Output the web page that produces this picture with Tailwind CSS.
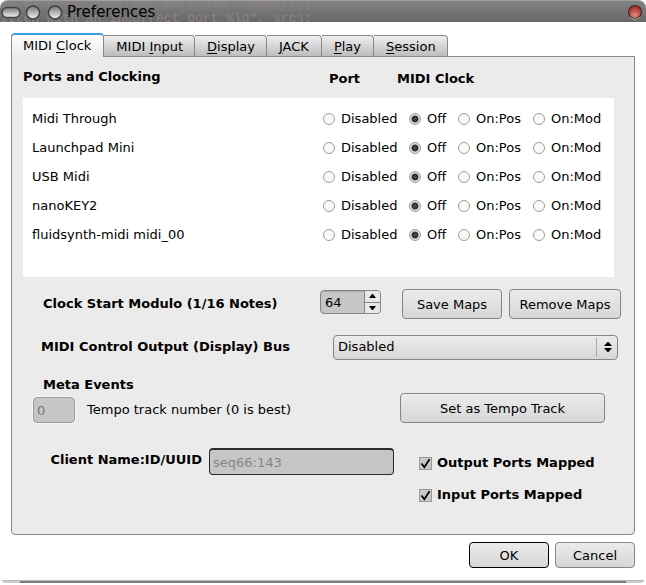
<!DOCTYPE html>
<html lang="en">
<head>
<meta charset="utf-8">
<meta name="viewport" content="width=device-width, initial-scale=1">
<title>Preferences</title>
<script src="https://cdn.jsdelivr.net/npm/@tailwindcss/browser@4"></script>
</head>
<body class="min-h-screen bg-white font-['DejaVu_Sans',sans-serif] text-[13px] leading-4 text-black">
<div class="flex min-h-screen flex-col pb-[2px]">

  <header class="relative flex h-[22px] items-center overflow-hidden rounded-t-lg border-t border-[#a0a0a0] bg-linear-to-b from-[#838383] via-[#757575] to-[#686868]">
    <div aria-hidden="true" class="absolute top-[-5px] left-0 font-['Liberation_Mono',monospace] text-[13px] leading-[15px] whitespace-pre text-[#8d8480]"><div>ed with an incorrect port %ld", myport);</div><div>itten with an incorrect port %ld", src);</div></div>
    <button type="button" aria-label="Menu" class="relative flex pl-px"><svg width="21" height="18" viewBox="0 0 21 18"><defs><linearGradient id="g" x1="0" y1="0" x2="0" y2="1"><stop offset="0" stop-color="#777"/><stop offset="1" stop-color="#f4f4f4"/></linearGradient></defs><rect x="1" y="4.5" width="18" height="10" rx="5" fill="url(#g)" stroke="#444" stroke-width="1.5"/></svg></button>
    <div class="relative flex gap-1 pl-[3px]">
      <button type="button" aria-label="Minimize" class="flex"><svg width="18" height="18" viewBox="0 0 18 18"><circle cx="8" cy="9.5" r="6.5" fill="url(#g)" stroke="#444" stroke-width="1.5"/></svg></button>
      <button type="button" aria-label="Maximize" class="flex"><svg width="18" height="18" viewBox="0 0 18 18"><circle cx="8" cy="9.5" r="6.5" fill="url(#g)" stroke="#444" stroke-width="1.5"/></svg></button>
    </div>
    <h1 class="relative flex-1 pl-[2px] text-[15px] leading-5">Preferences</h1>
    <button type="button" aria-label="Close" class="relative mr-[3px] flex"><svg width="16" height="16" viewBox="0 0 16 16"><defs><radialGradient id="r" cx=".5" cy=".75" r=".65"><stop offset="0" stop-color="#e08a84"/><stop offset="1" stop-color="#a52a2a"/></radialGradient></defs><circle cx="8" cy="8" r="6.5" fill="url(#r)" stroke="#3a2a2a" stroke-width="1.2"/><path d="M3 13.2A7.2 7.2 0 0 0 13 13.2" fill="none" stroke="#b5b5b5" stroke-width=".8"/></svg></button>
  </header>

  <main class="flex flex-1 flex-col px-[11px] pt-[11px]">
    <div role="tablist" class="relative z-10 -mb-px flex items-end">
      <button role="tab" aria-selected="true" type="button" class="h-6 rounded-t border-x border-t-2 border-x-[#888] border-t-[#3a9fe6] bg-linear-to-b from-white to-[#ebebeb] pr-3 pl-[11px]">MIDI <u class="underline-offset-2">C</u>lock</button>
      <button role="tab" type="button" class="h-[22px] rounded-tr border-y border-r border-[#888] bg-linear-to-b from-[#efefef] to-[#bdbdbd] pt-px pr-[11px] pl-3">MIDI <u class="underline-offset-2">I</u>nput</button>
      <button role="tab" type="button" class="h-[22px] rounded-tr border-y border-r border-[#888] bg-linear-to-b from-[#efefef] to-[#bdbdbd] pt-px pr-[11px] pl-3"><u class="underline-offset-2">D</u>isplay</button>
      <button role="tab" type="button" class="h-[22px] rounded-tr border-y border-r border-[#888] bg-linear-to-b from-[#efefef] to-[#bdbdbd] px-3 pt-px"><u class="underline-offset-2">J</u>ACK</button>
      <button role="tab" type="button" class="h-[22px] rounded-tr border-y border-r border-[#888] bg-linear-to-b from-[#efefef] to-[#bdbdbd] px-3 pt-px"><u class="underline-offset-2">P</u>lay</button>
      <button role="tab" type="button" class="h-[22px] rounded-tr border-y border-r border-[#888] bg-linear-to-b from-[#efefef] to-[#bdbdbd] pt-px pr-[11px] pl-3"><u class="underline-offset-2">S</u>ession</button>
    </div>

    <section role="tabpanel" class="flex-1 rounded-b border border-[#888] bg-[#ebebeb] pr-[13px] pl-[11px]">
      <div class="flex h-[41px] items-center pb-[2px] font-bold">
        <h2 class="flex-1">Ports and Clocking</h2>
        <h3 class="mt-1 w-[68px]">Port</h3>
        <h3 class="mt-1 w-56">MIDI Clock</h3>
      </div>

      <div id="ports" class="mr-[7px] flex h-[179px] flex-col bg-white pt-[6px] pl-[9px]"></div>

      <div class="flex h-[54px] items-center pl-5">
        <label for="modulo" class="flex-1 font-bold">Clock Start Modulo (1/16 Notes)</label>
        <div class="mr-[21px] mb-1 flex h-6 w-[61px] overflow-hidden rounded border border-[#858585] bg-[#c6c6c6]">
          <input id="modulo" type="number" value="64" class="w-0 flex-1 appearance-none border-t border-[#aaa] pl-1 [-moz-appearance:textfield] [&::-webkit-inner-spin-button]:appearance-none">
          <div class="flex w-[16px] flex-col border-l border-[#858585] bg-[#e8e8e8]">
            <button type="button" aria-label="Increase" class="flex flex-1 items-center justify-center border-b border-[#858585]"><svg width="7" height="4" viewBox="0 0 7 4"><path d="M0 4L3 0H4L7 4Z"/></svg></button>
            <button type="button" aria-label="Decrease" class="flex flex-1 items-center justify-center"><svg width="7" height="4" viewBox="0 0 7 4"><path d="M0 0L3 4H4L7 0Z"/></svg></button>
          </div>
        </div>
        <button type="button" class="mr-[7px] h-[30px] w-[100px] rounded border border-[#858585] bg-linear-to-b from-[#ececec] to-[#d6d6d6] pt-[2px]">Save Maps</button>
        <button type="button" class="h-[30px] w-[112px] rounded border border-[#858585] bg-linear-to-b from-[#ececec] to-[#d6d6d6] pt-[2px]">Remove Maps</button>
      </div>

      <div class="flex h-8 items-center pr-[3px] pl-[18px]">
        <label for="bus" class="flex-1 font-bold">MIDI Control Output (Display) Bus</label>
        <div class="relative flex w-[285px]">
          <select id="bus" class="h-[25px] w-full appearance-none rounded border border-[#858585] bg-linear-to-b from-[#ececec] to-[#d6d6d6] pl-1"><option>Disabled</option></select>
          <div class="pointer-events-none absolute inset-y-[3px] right-0 flex w-[22px] items-center justify-center border-l border-[#aaa]"><svg width="8" height="12" viewBox="0 0 8 12"><path d="M0 5L3.5 1H4.5L8 5ZM0 7L3.5 11H4.5L8 7Z"/></svg></div>
        </div>
      </div>

      <div class="flex items-center justify-between pt-[14px]">
        <div class="pl-[10px]">
          <h2 class="mb-1 pl-[10px] font-bold">Meta Events</h2>
          <div class="flex items-center gap-3">
            <input id="tempo" type="text" value="0" disabled class="h-[26px] w-[42px] rounded border border-[#999] bg-[#c6c6c6] pl-[3px] text-[#777] outline outline-[#f8f8f8]">
            <label for="tempo">Tempo track number (0 is best)</label>
          </div>
        </div>
        <button type="button" class="mt-4 mr-4 h-[30px] w-[205px] rounded border border-[#858585] bg-linear-to-b from-[#ececec] to-[#d6d6d6] pt-[2px]">Set as Tempo Track</button>
      </div>

      <div class="flex items-start pt-[25px]">
        <label for="client" class="flex-1 pt-1 pr-[7px] text-right font-bold">Client Name:ID/UUID</label>
        <input id="client" type="text" value="seq66:143" disabled class="mr-[25px] h-[27px] w-[185px] rounded border border-t-2 border-[#2a2a2f] bg-[#c6c6c6] pl-[3px] text-[#858585]">
        <div class="flex w-[202px] flex-col gap-4 pt-[7px] font-bold">
          <label class="flex items-center gap-[5px]"><input type="checkbox" checked class="sr-only"><svg width="13" height="13" viewBox="0 0 13 13"><rect x=".5" y=".5" width="12" height="12" fill="#c8c8c8" stroke="#999"/><path d="M2.5 6.5L5.3 10.3L10.5 2.2" fill="none" stroke="#000" stroke-width="1.7"/></svg>Output Ports Mapped</label>
          <label class="flex items-center gap-[5px]"><input type="checkbox" checked class="sr-only"><svg width="13" height="13" viewBox="0 0 13 13"><rect x=".5" y=".5" width="12" height="12" fill="#c8c8c8" stroke="#999"/><path d="M2.5 6.5L5.3 10.3L10.5 2.2" fill="none" stroke="#000" stroke-width="1.7"/></svg>Input Ports Mapped</label>
        </div>
      </div>
    </section>
  </main>

  <footer>
    <div class="flex justify-end gap-[6px] px-[11px] pt-[7px] pb-3">
      <button type="button" class="h-[26px] w-20 rounded border border-black bg-linear-to-b from-[#ececec] to-[#d6d6d6] pt-[2px]">OK</button>
      <button type="button" class="h-[26px] w-20 rounded border border-[#858585] bg-linear-to-b from-[#ececec] to-[#d6d6d6] pt-[2px]">Cancel</button>
    </div>
    <div class="mx-[2px] flex h-[3px] rounded-b-sm border-t border-[#bbb] bg-[#ccc] px-[18px]"><div class="flex-1 bg-[#7e7c7c]"></div></div>
  </footer>
</div>
<script>
const names = ["Midi Through", "Launchpad Mini", "USB Midi", "nanoKEY2", "fluidsynth-midi midi_00"];
const opts = [["Disabled", "w-[86px]"], ["Off", "w-[49px]"], ["On:Pos", "w-[75px]"], ["On:Mod", "w-[81px]"]];
document.getElementById("ports").innerHTML = names.map((n, i) =>
  `<div role="radiogroup" aria-label="${n}" class="flex h-[29px] items-center"><span class="flex-1">${n}</span>` +
  opts.map(([o, w]) => `<label class="flex items-center gap-[6px] ${w}"><input type="radio" name="port${i}" ${o === "Off" ? "checked" : ""} class="size-3 shrink-0 appearance-none rounded-full border border-[#a39b92] bg-[#fbfaf9] checked:bg-[radial-gradient(circle,#56606a_0,#2b3238_2px,#33393f_3px,#e4e2df_4px)]">${o}</label>`).join("") +
  `</div>`).join("");
</script>
</body>
</html>
